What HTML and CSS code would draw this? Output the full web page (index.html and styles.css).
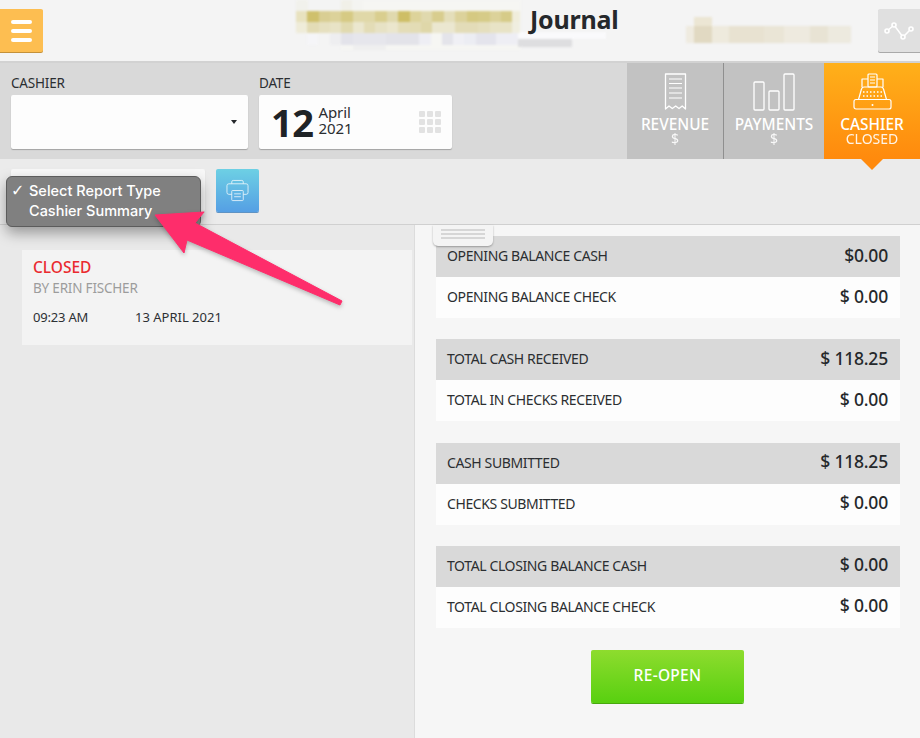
FILE: index.html
```html
<!DOCTYPE html>
<html lang="en">
<head>
<meta charset="utf-8">
<title>Journal</title>
<link rel="stylesheet" href="styles.css">
</head>
<body>
<div class="app">
  <header class="header">
    <button class="menu-btn" aria-label="Menu"><span></span><span></span><span></span></button>
    <svg class="censor censor-left" width="315" height="50" viewBox="0 0 315 50" aria-hidden="true">
      <rect x="45" y="0" width="180" height="50" fill="#f6f6f3"/>
      <rect x="222" y="32" width="88" height="7" fill="#fafafc"/>
      <rect x="222" y="39" width="54" height="8" fill="#dedee0"/>
      <rect x="0" y="0" width="12" height="11" fill="#f1f1ec"/><rect x="45" y="0" width="11" height="11" fill="#f1f0e8"/><rect x="56" y="0" width="11" height="11" fill="#f4f4f1"/>
      <rect x="0" y="11" width="11" height="11" fill="#e8e2bf"/><rect x="11" y="11" width="12" height="11" fill="#cfc06c"/><rect x="23" y="11" width="11" height="11" fill="#d9ce93"/><rect x="34" y="11" width="11" height="11" fill="#dcd29a"/><rect x="45" y="11" width="12" height="11" fill="#d6ca84"/><rect x="57" y="11" width="11" height="11" fill="#e0d8a8"/><rect x="68" y="11" width="11" height="11" fill="#e0d8a8"/><rect x="79" y="11" width="12" height="11" fill="#d9ce8f"/><rect x="91" y="11" width="11" height="11" fill="#e0d9ae"/><rect x="102" y="11" width="12" height="11" fill="#cebe66"/><rect x="114" y="11" width="11" height="11" fill="#ddd39a"/><rect x="125" y="11" width="11" height="11" fill="#e0d9ae"/><rect x="136" y="11" width="12" height="11" fill="#d8cd8e"/><rect x="148" y="11" width="11" height="11" fill="#e4deba"/><rect x="159" y="11" width="12" height="11" fill="#dcd29b"/><rect x="171" y="11" width="11" height="11" fill="#d5c982"/><rect x="182" y="11" width="12" height="11" fill="#d6cb88"/><rect x="194" y="11" width="11" height="11" fill="#dcd29a"/><rect x="205" y="11" width="11" height="11" fill="#d6cb88"/><rect x="216" y="11" width="8" height="11" fill="#f0eddc"/>
      <rect x="0" y="22" width="11" height="11" fill="#efecd9"/><rect x="11" y="22" width="12" height="11" fill="#e3dcb6"/><rect x="23" y="22" width="11" height="11" fill="#e6e0c0"/><rect x="34" y="22" width="11" height="11" fill="#e8e3c6"/><rect x="45" y="22" width="12" height="11" fill="#e1dab0"/><rect x="57" y="22" width="11" height="11" fill="#ebe7cf"/><rect x="68" y="22" width="11" height="11" fill="#e3dcb6"/><rect x="79" y="22" width="12" height="11" fill="#e7e2c5"/><rect x="91" y="22" width="11" height="11" fill="#ebe6cd"/><rect x="102" y="22" width="12" height="11" fill="#e4ddb8"/><rect x="114" y="22" width="11" height="11" fill="#e3dcb5"/><rect x="125" y="22" width="11" height="11" fill="#dfd7a9"/><rect x="136" y="22" width="12" height="11" fill="#ebe7d0"/><rect x="148" y="22" width="11" height="11" fill="#ebe7d0"/><rect x="159" y="22" width="12" height="11" fill="#e3dcb8"/><rect x="171" y="22" width="11" height="11" fill="#e3dcb8"/><rect x="182" y="22" width="12" height="11" fill="#e5dfbe"/><rect x="194" y="22" width="22" height="11" fill="#e8e3c6"/><rect x="216" y="22" width="8" height="11" fill="#f0eee0"/>
      <rect x="11" y="33" width="11" height="12" fill="#f5f5f8"/><rect x="34" y="33" width="11" height="12" fill="#eeeef0"/><rect x="45" y="33" width="12" height="12" fill="#e3e3ea"/><rect x="57" y="33" width="33" height="12" fill="#e6e6ec"/><rect x="90" y="33" width="33" height="12" fill="#e3e3e9"/><rect x="123" y="33" width="12" height="12" fill="#eeeef4"/><rect x="146" y="33" width="11" height="12" fill="#e4e4ea"/><rect x="157" y="33" width="11" height="12" fill="#f0f0f5"/><rect x="168" y="33" width="12" height="12" fill="#ecedf3"/><rect x="180" y="33" width="20" height="12" fill="#e4e4ec"/><rect x="200" y="33" width="22" height="12" fill="#eeeef4"/>
      <rect x="57" y="45" width="33" height="6" fill="#efefef"/>
    </svg>
    <h1 class="title">Journal</h1>
    <svg class="censor censor-right" width="165" height="28" viewBox="0 0 165 28" aria-hidden="true">
      <rect x="0" y="9" width="9" height="17" fill="#efebe0"/>
      <rect x="8" y="0" width="18" height="9" fill="#ece6d4"/>
      <rect x="8" y="9" width="18" height="17" fill="#e1d9c2"/>
      <rect x="26" y="9" width="17" height="17" fill="#eeeadd"/>
      <rect x="43" y="9" width="35" height="17" fill="#e8e2d1"/>
      <rect x="78" y="9" width="20" height="17" fill="#eae5d6"/>
      <rect x="98" y="9" width="26" height="17" fill="#eeeadf"/>
      <rect x="124" y="9" width="18" height="17" fill="#e8e3d4"/>
      <rect x="142" y="9" width="23" height="17" fill="#edeadf"/>
    </svg>
    <button class="chart-btn" aria-label="Trends">
      <svg width="30" height="18" viewBox="0 0 30 18"><path d="M3 9 10 3l9 12 8-8" fill="none" stroke="#fff" stroke-width="1.500"/><g fill="#e0e0e0" stroke="#fff" stroke-width="1.600"><circle cx="3" cy="9" r="2"/><circle cx="10" cy="3" r="2"/><circle cx="19" cy="15" r="2"/><circle cx="27" cy="7" r="2"/></g></svg>
    </button>
  </header>

  <section class="toolbar">
    <div class="fields">
      <div class="field field-cashier">
        <label class="field-label">CASHIER</label>
        <div class="input select-input"><span class="caret"></span></div>
      </div>
      <div class="field field-date">
        <label class="field-label">DATE</label>
        <div class="input date-input">
          <span class="day">12</span>
          <span class="month-year"><span>April</span><span>2021</span></span>
          <span class="cal-grid"><i></i><i></i><i></i><i></i><i></i><i></i><i></i><i></i><i></i></span>
        </div>
      </div>
    </div>
    <nav class="tabs">
      <div class="tab tab-revenue">
        <svg width="24" height="38" viewBox="0 0 24 38"><path d="M2.500 1h20v35l-3.300-3-3.200 2.600-3.300-2.600-3.400 2.600L6 33l-3.500 3z" fill="none" stroke="#fff" stroke-width="1.300" stroke-linejoin="round"/><path d="M6 6h13M6 10.500h13M6 15h13M6 20h13M6 25h13" stroke="#fff" stroke-width="1.200"/></svg>
        <span class="tab-name">REVENUE</span><span class="tab-sub">$</span>
      </div>
      <div class="tab tab-payments">
        <svg width="42" height="38" viewBox="0 0 42 38"><g fill="none" stroke="#fff" stroke-width="1.300"><rect x="1" y="9" width="10" height="28" rx="1"/><rect x="16" y="18" width="10" height="19" rx="1"/><rect x="31" y="1" width="10" height="36" rx="1"/></g></svg>
        <span class="tab-name">PAYMENTS</span><span class="tab-sub">$</span>
      </div>
      <div class="tab tab-cashier">
        <svg width="39" height="38" viewBox="0 0 39 38"><g fill="none" stroke="#fff" stroke-width="1.200" stroke-linejoin="round"><rect x="15" y="1" width="9" height="13" rx="1"/><path d="M15 6H9v8M24 6h6v8"/><path d="M11 14h17q2 0 2.500 2l3 10.500H5.500l3-10.500q.5-2 2.500-2z"/><rect x="1" y="26.500" width="37" height="9.500" rx="2"/></g><path d="M17 4h5M17 7h5M17 10h5" stroke="#fff" stroke-width="1"/><path d="M10 19h19M10 23h19" stroke="#fff" stroke-width="1.400" stroke-dasharray="1.500 2"/><circle cx="19.500" cy="32" r="1" fill="#fff"/></svg>
        <span class="tab-name">CASHIER</span><span class="tab-sub">CLOSED</span>
      </div>
    </nav>
  </section>

  <section class="report-bar">
    <div class="report-select"></div>
    <button class="print-btn" aria-label="Print">
      <svg width="23" height="23" viewBox="0 0 24 24"><g fill="none" stroke="#fff" stroke-width=".9" stroke-linejoin="round" opacity=".85"><path d="M6 5V3q0-1.500 1.500-1.500h9Q18 1.500 18 3v2"/><path d="M6 16H3q-2 0-2-2V7q0-2 2-2h18q2 0 2 2v7q0 2-2 2h-3"/><rect x="6" y="12" width="12" height="10.500" rx=".8"/></g><path d="M8.500 15.500h7M8.500 18.500h7" stroke="#fff" stroke-width=".9" opacity=".85"/></svg>
    </button>
  </section>

  <main class="content">
    <aside class="left-panel">
      <article class="status-card">
        <div class="status">CLOSED</div>
        <div class="by">BY ERIN FISCHER</div>
        <div class="when"><span class="time">09:23 AM</span><span class="date">13 APRIL 2021</span></div>
      </article>
    </aside>
    <section class="right-panel">
      <div class="handle"><span></span><span></span><span></span></div>
      <div class="group">
        <div class="row row-dark"><span>OPENING BALANCE CASH</span><b>$0.00</b></div>
        <div class="row"><span>OPENING BALANCE CHECK</span><b>$ 0.00</b></div>
      </div>
      <div class="group">
        <div class="row row-dark"><span>TOTAL CASH RECEIVED</span><b>$ 118.25</b></div>
        <div class="row"><span>TOTAL IN CHECKS RECEIVED</span><b>$ 0.00</b></div>
      </div>
      <div class="group">
        <div class="row row-dark"><span>CASH SUBMITTED</span><b>$ 118.25</b></div>
        <div class="row"><span>CHECKS SUBMITTED</span><b>$ 0.00</b></div>
      </div>
      <div class="group">
        <div class="row row-dark"><span>TOTAL CLOSING BALANCE CASH</span><b>$ 0.00</b></div>
        <div class="row"><span>TOTAL CLOSING BALANCE CHECK</span><b>$ 0.00</b></div>
      </div>
      <button class="reopen">RE-OPEN</button>
    </section>
  </main>

  <div class="popup">
    <div class="popup-item"><span class="check">✓</span>Select Report Type</div>
    <div class="popup-item">Cashier Summary</div>
  </div>
  <svg class="annotation" width="360" height="320" viewBox="0 0 360 320" aria-hidden="true">
    <polygon points="155,215 204,212 195,223 342,301 340,305 187,240 184,253" fill="#fe2d6b" stroke="#fe2d6b" stroke-width="1" stroke-linejoin="round"/>
  </svg>
</div>
</body>
</html>
```
FILE: styles.css
```css
* { box-sizing: border-box; }
html, body { margin: 0; padding: 0; height: 100%; }
body { font-family: "Noto Sans", "Open Sans", sans-serif; color: #25282b; background: #f3f3f3; overflow: hidden; }
button { border: 0; padding: 0; font: inherit; cursor: pointer; }

.app { position: relative; width: 920px; height: 738px; display: flex; flex-direction: column; overflow: hidden; }

.header { position: relative; height: 63px; flex: none; background: #f4f4f4; border-bottom: 2px solid #d2d2d2; display: flex; align-items: flex-start; }
.menu-btn { width: 43px; height: 43px; margin-top: 9px; background: #fdbe51; border-radius: 0 2px 2px 0; box-shadow: 0 1px 0 #c4913a; display: flex; flex-direction: column; justify-content: center; gap: 5px; padding: 0 11px; }
.menu-btn span { display: block; height: 4px; border-radius: 2px; background: #fff; }
.censor { position: absolute; filter: blur(1px); }
.censor-left { left: 296px; top: 0; }
.censor-right { left: 686px; top: 17px; }
.title { position: absolute; left: 530px; top: 2px; margin: 0; font-size: 25px; line-height: 34px; font-weight: 700; letter-spacing: -.2px; color: #25282b; }
.chart-btn { margin-left: auto; margin-top: 9px; width: 42px; height: 43px; background: #e0e0e0; border-radius: 2px 0 0 2px; box-shadow: 0 1px 0 #a9a9a9; display: flex; align-items: center; justify-content: center; }

.toolbar { height: 96px; flex: none; background: #d9d9d9; display: flex; justify-content: space-between; }
.fields { display: flex; gap: 11px; padding-left: 11px; }
.field-label { display: block; font-size: 13.500px; line-height: 18px; margin-top: 11px; margin-bottom: 3px; letter-spacing: -.2px; color: #2b2e31; }
.field-cashier { width: 237px; }
.field-date { width: 193px; }
.input { height: 54px; background: #fdfdfd; border-radius: 2px; box-shadow: 0 1px 1px rgba(0,0,0,.25); display: flex; align-items: center; position: relative; }
.select-input { justify-content: flex-end; padding-right: 11px; }
.caret { width: 0; height: 0; border-left: 3px solid transparent; border-right: 3px solid transparent; border-top: 4px solid #25282b; }
.date-input { padding-left: 12px; }
.day { font-size: 38px; line-height: 44px; font-weight: 700; letter-spacing: -.5px; color: #1f2326; }
.month-year { display: flex; flex-direction: column; margin: 0 0 5px 5px; font-size: 15px; line-height: 16px; letter-spacing: -.1px; color: #2b2e31; }
.cal-grid { margin-left: auto; margin-right: 11px; width: 22px; height: 22px; display: grid; grid-template-columns: repeat(3, 6px); grid-template-rows: repeat(3, 6px); gap: 2px; }
.cal-grid i { background: #e2e2e2; border-radius: 1px; }

.tabs { display: flex; }
.tab { display: flex; flex-direction: column; align-items: center; color: #fff; padding-top: 10px; background: #c2c2c2; }
.tab svg { display: block; height: 38px; }
.tab-revenue { width: 97px; border-right: 1px solid #8f8f8f; }
.tab-payments { width: 100px; }
.tab-cashier { width: 96px; position: relative; background: linear-gradient(#ffb01a, #ff8a0d); }
.tab-cashier::after { content: ""; position: absolute; left: 37px; bottom: -11px; border-left: 11px solid transparent; border-right: 11px solid transparent; border-top: 11px solid #ff8a0d; }
.tab-name { font-size: 15.400px; line-height: 18px; margin-top: 5px; font-weight: 500; letter-spacing: 0; }
.tab-sub { font-size: 14px; line-height: 15px; margin-top: -3px; letter-spacing: 0; opacity: .9; }

.report-bar { height: 66px; flex: none; background: #ebebeb; border-bottom: 1px solid #d0d0d0; display: flex; gap: 11px; padding: 10px 0 0 11px; align-items: flex-start; }
.report-select { width: 194px; height: 43px; background: #f8f8f8; box-shadow: 0 1px 1px rgba(0,0,0,.15); border-radius: 2px; }
.print-btn { width: 43px; height: 43px; border-radius: 2px; background: linear-gradient(#6dd0e4, #559fe4); box-shadow: 0 1px 0 #5f93c4; display: flex; align-items: center; justify-content: center; }

.content { flex: 1; display: flex; min-height: 0; }
.left-panel { width: 415px; flex: none; background: #e9e9e9; border-right: 1px solid #dcdcdc; padding: 25px 2px 0 22px; }
.status-card { height: 95px; background: #f3f3f3; padding: 8px 11px; }
.status { font-size: 15.500px; line-height: 18px; font-weight: 500; color: #ea2a2f; }
.by { font-size: 13.500px; line-height: 18px; margin-top: 3px; letter-spacing: -.2px; color: #9c9c9c; }
.when { display: flex; font-size: 13px; line-height: 18px; margin-top: 11px; letter-spacing: -.2px; color: #2d3033; }
.time { width: 102px; }
.date { letter-spacing: 0; }

.right-panel { position: relative; flex: 1; background: #f6f6f6; padding: 11px 20px 0 21px; display: flex; flex-direction: column; gap: 21.330px; }
.handle { position: absolute; left: 18px; top: 0; width: 60px; height: 21px; background: #f4f4f4; border-radius: 0 0 5px 5px; box-shadow: 0 1px 2px rgba(0,0,0,.3); display: flex; flex-direction: column; gap: 2px; padding: 4px 8px; z-index: 1; }
.handle span { height: 2px; background: #d6d6d6; }
.row { height: 41px; background: #fdfdfd; display: flex; align-items: center; justify-content: space-between; padding: 0 12px 2px 11px; font-size: 14px; letter-spacing: -.38px; color: #2b2e31; }
.row-dark { background: #d9d9d9; }
.row b { font-size: 17.500px; font-weight: 500; letter-spacing: -.2px; margin-bottom: 2px; color: #25282b; }
.reopen { align-self: center; width: 153px; height: 53px; margin-top: 1px; margin-left: -1px; padding-bottom: 3px; border-radius: 2px; background: linear-gradient(#8edc2e, #58d010); box-shadow: 0 1px 0 #48a80e; color: #fff; font-size: 15.500px; font-weight: 500; letter-spacing: .3px; }

.popup { position: absolute; left: 6px; top: 176px; width: 195px; height: 51px; background: #808080; border: 1px solid #5c5c5c; border-radius: 6px; box-shadow: 0 6px 14px rgba(0,0,0,.35); padding: 4px 0 0 22px; color: #fff; font-family: Inter, "Liberation Sans", sans-serif; font-size: 14.500px; font-weight: 500; line-height: 20px; z-index: 5; }
.popup-item { position: relative; white-space: nowrap; }
.check { position: absolute; left: -18px; top: 0; font-family: "DejaVu Sans", sans-serif; font-size: 16px; }
.annotation { position: absolute; left: 0; top: 0; z-index: 6; filter: drop-shadow(0 2px 2px rgba(0,0,0,.25)); }
```
